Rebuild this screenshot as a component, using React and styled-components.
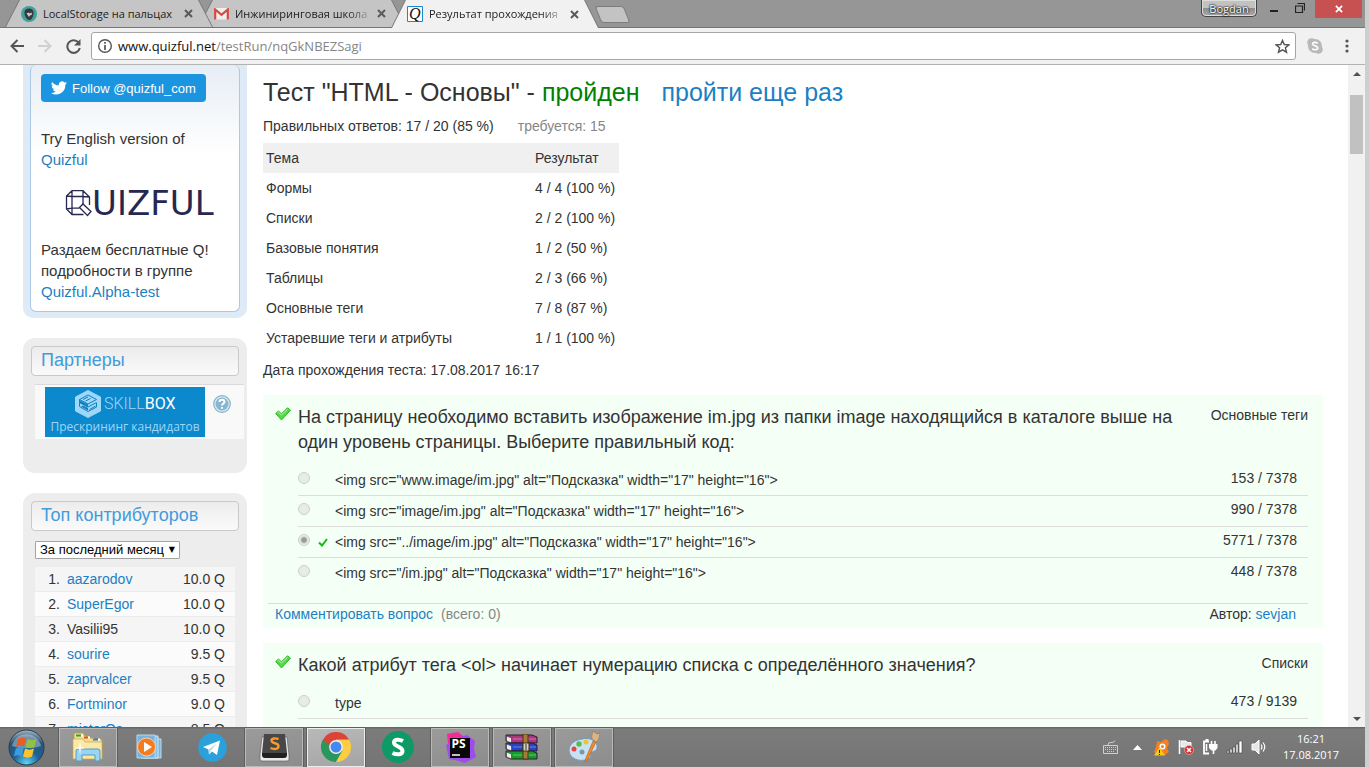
import React from "react";
import styled, { createGlobalStyle, css } from "styled-components";

const sans = '"Liberation Sans", Arial, sans-serif';
const ui = '"Open Sans", "Noto Sans", sans-serif';

const GlobalStyle = createGlobalStyle`
  * { box-sizing: border-box; }
  body { margin: 0; font: 14px/20px ${sans}; color: #333; background: #d2d2d2; }
  button, select, input { font: inherit; margin: 0; }
  button { padding: 0; border: 0; background: none; color: inherit; }
  a { color: #1c7fc4; text-decoration: none; }
  svg { display: block; flex: none; }
`;

const Desktop = styled.div`
  display: flex;
  flex-direction: column;
  height: 100vh;
  overflow: hidden;
  border-right: 4px solid #cecece;
  background: #fff;
`;

/* Browser window */
const TitleBar = styled.header`
  display: flex;
  align-items: flex-start;
  flex: none;
  height: 28px;
  padding-left: 5px;
  background: linear-gradient(#969696 27px, #757575 27px);
`;
const TabStrip = styled.nav`
  display: flex;
  flex: 1;
`;
const tabShape = css`
  clip-path: polygon(14px 0, calc(100% - 14px) 0, 100% 100%, 0 100%);
`;
const Tab = styled.div`
  position: relative;
  z-index: ${(p) => (p.$active ? 3 : p.$order)};
  display: flex;
  align-items: center;
  width: 208px;
  height: ${(p) => (p.$active ? 28 : 27)}px;
  margin-right: -15px;
  padding: 0 20px 0 16px;
  background: #797979;
  ${tabShape}
  &::before {
    content: "";
    position: absolute;
    z-index: -1;
    inset: 0 1px;
    background: ${(p) => (p.$active ? "#f1f1f1" : "#c5c5c5")};
    ${tabShape}
  }
`;
const TabTitle = styled.a`
  flex: 1;
  margin: 0 4px 0 6px;
  overflow: hidden;
  white-space: nowrap;
  font: 11px/16px ${ui};
  color: #222;
  ${(p) => p.$fade && css`mask-image: linear-gradient(90deg, #000 82%, transparent);`}
`;
const IconButton = styled.button`
  display: flex;
  align-items: center;
  justify-content: center;
`;
const NewTab = styled.button`
  width: 29px;
  height: 17px;
  margin: 6px 0 0 14px;
  background: #c3c3c3;
  border: 1px solid #7c7c7c;
  border-radius: 3px;
  transform: skewX(22deg);
`;
const Profile = styled.button`
  width: 56px;
  height: 17px;
  margin-right: 4px;
  font: 11px/15px ${ui};
  color: #fff;
  text-shadow: 0 0 2px #222, 0 0 2px #222, 0 0 1px #222;
  background: linear-gradient(#c2c2c2 50%, #8b8b8b 50%, #aaa);
  border: 1px solid #444;
  border-top: 0;
  border-radius: 0 0 5px 5px;
  box-shadow: inset 0 0 0 1px #ddd;
`;
const WindowButton = styled(IconButton)`
  width: ${(p) => (p.$close ? 47 : 26)}px;
  height: 18px;
  background: ${(p) => (p.$close ? "#c75050" : "transparent")};
  margin: ${(p) => (p.$close ? "0 3px 0 2px" : 0)};
`;
const WindowControls = styled.div`
  display: flex;
`;
const Toolbar = styled.div`
  display: flex;
  align-items: center;
  flex: none;
  height: 37px;
  padding: 0 4px 0 8px;
  background: #f1f1f1;
  border-bottom: 1px solid #b3b3b3;
`;
const ToolButton = styled(IconButton)`
  width: ${(p) => p.$width || 28}px;
  height: 28px;
`;
const AddressBar = styled.div`
  display: flex;
  align-items: center;
  flex: 1;
  height: 28px;
  margin-left: 9px;
  padding: 0 5px;
  background: #fff;
  border: 1px solid #a6a6a6;
  border-radius: 3px;
`;
const Address = styled.p`
  flex: 1;
  margin: 0 0 0 5px;
  font: 13px/20px ${ui};
  color: #858585;
  b { font-weight: 400; color: #111; }
`;

/* Page */
const Viewport = styled.div`
  display: flex;
  flex: 1;
  min-height: 0;
`;
const Page = styled.div`
  display: flex;
  flex: 1;
  gap: 16px;
  min-width: 0;
  padding: 0 25px 0 23px;
  overflow: hidden;
`;
const Scrollbar = styled.div`
  display: flex;
  flex-direction: column;
  align-items: center;
  width: 17px;
  padding: 7px 0 6px;
  background: #f1f1f1;
`;
const Thumb = styled.div`
  width: 13px;
  height: 59px;
  margin: 19px 0 auto;
  background: #c1c1c1;
`;
const Triangle = styled.i`
  border: 4px solid transparent;
  border-top: ${(p) => (p.$up ? 0 : "4px solid #505050")};
  border-bottom: ${(p) => (p.$up ? "4px solid #505050" : 0)};
`;

const Sidebar = styled.aside`
  display: flex;
  flex-direction: column;
  flex: none;
  gap: 20px;
  width: 224px;
`;
const Promo = styled.section`
  flex: none;
  padding: 0 7px 6px;
  background: #deebf7;
  border-radius: 0 0 10px 10px;
`;
const PromoBody = styled.div`
  padding: 9px 10px;
  font-size: 15px;
  line-height: 21px;
  background: linear-gradient(#e7edf5, #fff 90px);
  border: 1px solid #a9cae6;
  border-top: 0;
  border-radius: 6px;
  p { margin: 0; }
`;
const Follow = styled.a`
  display: flex;
  align-items: center;
  gap: 5px;
  width: 165px;
  height: 28px;
  margin-bottom: 26px;
  padding-left: 10px;
  font-size: 13px;
  white-space: nowrap;
  color: #fff;
  background: #1b95e0;
  border-radius: 4px;
`;
const Logo = styled.div`
  display: flex;
  align-items: center;
  height: 28px;
  margin: 19px 0 22px 24px;
  font: 34px/28px "DejaVu Sans", sans-serif;
  color: #272851;
`;
const Card = styled.section`
  display: flex;
  flex-direction: column;
  flex: ${(p) => (p.$grow ? "1 0 auto" : "none")};
  padding: 8px 8px ${(p) => (p.$grow ? 0 : 34)}px;
  background: #ededed;
  border-radius: 12px;
`;
const CardTitle = styled.h2`
  margin: 0 0 8px;
  padding: 0 9px;
  font-size: 18px;
  font-weight: 400;
  line-height: 26px;
  height: 30px;
  color: #429bdc;
  background: linear-gradient(#ececec, #fafafa);
  border: 1px solid #c9c9c9;
  border-radius: 4px;
`;
const Partner = styled.div`
  display: flex;
  gap: 8px;
  margin: 0 -5px 0 4px;
  padding: 2px 0 2px 10px;
  background: #f9f9f9;
  border-top: 1px solid #dadada;
`;
const Banner = styled.a`
  display: block;
  width: 160px;
  height: 50px;
  padding-top: 3px;
  text-align: center;
  white-space: nowrap;
  background: #0c88cd;
  font: 12px/18px "Open Sans", sans-serif;
  color: #9dd7fa;
`;
const BannerBrand = styled.span`
  display: flex;
  align-items: center;
  gap: 3px;
  height: 28px;
  padding-left: 30px;
  font: 300 16px/28px Roboto, sans-serif;
  b { font-weight: 400; color: #fff; }
`;
const Help = styled(IconButton)`
  height: 18px;
  margin-top: 8px;
`;
const SelectBox = styled.div`
  position: relative;
  width: 145px;
  margin: 2px 0 8px 4px;
  &::after {
    content: "▼";
    position: absolute;
    right: 5px;
    top: 0;
    font: 8px/18px "DejaVu Sans", sans-serif;
    color: #000;
    pointer-events: none;
  }
`;
const Select = styled.select`
  display: block;
  width: 100%;
  height: 18px;
  padding: 0 4px;
  appearance: none;
  font-size: 13px;
  line-height: 16px;
  color: #000;
  background: #fff;
  border: 1px solid #a3a3a3;
  border-radius: 1px;
`;
const Ranking = styled.table`
  width: 200px;
  margin-left: 4px;
  border-spacing: 0;
  td { height: 25px; padding: 0; border-bottom: 1px solid #ececec; line-height: 20px; }
  td:first-child { width: 25px; text-align: right; }
  td:nth-child(2) { padding-left: 7px; }
  td:last-child { padding-right: 10px; text-align: right; }
  tr:nth-child(odd) { background: #f5f5f5; }
  tr:nth-child(even) { background: #fbfbfb; }
`;

const Main = styled.main`
  display: flex;
  flex-direction: column;
  flex: 1;
  min-width: 0;
  padding-top: 12px;
`;
const Title = styled.h1`
  margin: 0 0 9px;
  font-size: 25px;
  font-weight: 400;
  line-height: 30px;
  a { margin-left: 15px; }
`;
const Passed = styled.span`
  color: #008000;
`;
const Line = styled.p`
  margin: ${(p) => p.$top || 0}px 0 ${(p) => p.$bottom || 0}px;
`;
const Muted = styled.span`
  margin-left: ${(p) => p.$gap}px;
  color: #868686;
`;
const Results = styled.table`
  width: 356px;
  border-collapse: collapse;
  th, td { height: 30px; padding: 0 3px; text-align: left; font-weight: 400; }
  th { background: #f0f0f0; }
  th:first-child { width: 269px; }
`;
const Question = styled.section`
  flex: ${(p) => (p.$grow ? "1 0 auto" : "none")};
  margin-bottom: ${(p) => (p.$grow ? 0 : 15)}px;
  padding: 10px 15px 4px 5px;
  background: #f4fff6;
`;
const QuestionHead = styled.div`
  display: flex;
  align-items: flex-start;
  margin: 0 0 10px 7px;
  svg { margin-top: 2px; }
`;
const QuestionText = styled.h3`
  flex: 1;
  margin: 0 20px 0 7px;
  font-size: 18px;
  font-weight: 400;
  line-height: 25px;
`;
const Answers = styled.ul`
  list-style: none;
  margin: 0 0 0 30px;
  padding: 0;
`;
const Answer = styled.li`
  display: grid;
  grid-template-columns: 20px 17px 1fr auto;
  height: 31px;
  padding: 3px 11px 0 0;
  border-bottom: 1px solid ${(p) => (p.$last ? "transparent" : "#dcdedc")};
  label { padding-top: 2px; }
`;
const Radio = styled.input`
  appearance: none;
  width: 12px;
  height: 12px;
  margin-top: 4px;
  border: 1px solid #cbd0cb;
  border-radius: 50%;
  background: #e7ece7;
  &:checked { background: radial-gradient(circle, #989c98 2px, #e7ece7 4px); }
`;
const Mark = styled.span`
  padding-top: 8px;
`;
const QuestionFoot = styled.footer`
  display: flex;
  justify-content: space-between;
  margin-top: 14px;
  padding: 0 12px 0 7px;
  border-top: 1px solid #dcdedc;
`;

/* Taskbar */
const Taskbar = styled.footer`
  display: flex;
  align-items: center;
  flex: none;
  height: 40px;
  padding: 0 25px 0 8px;
  background: linear-gradient(#686868 1px, #7c7c7c 2px, #747474);
`;
const Apps = styled.div`
  display: flex;
  flex: 1;
  gap: 4px;
  margin-left: 14px;
`;
const AppButton = styled(IconButton)`
  width: 58px;
  height: 39px;
  ${(p) => p.$open && css`
    background: linear-gradient(160deg, #9b9b9b, #8c8c8c);
    border: 1px solid #b9b9b9;
    outline: 1px solid #5f5f5f;
  `}
  ${(p) => p.$active && css`
    background: linear-gradient(170deg, #b9b9b9, #a4a4a4);
    border-color: #eee;
  `}
`;
const Tray = styled.div`
  display: flex;
  align-items: center;
  gap: 8px;
  color: #fff;
`;
const Clock = styled.time`
  width: 58px;
  margin-left: 7px;
  font: 11px/16px ${ui};
  text-align: center;
  white-space: nowrap;
  color: #fff;
`;

const CloseIcon = ({ size = 9, color = "#5a5a5a", width = 2 }) => (
  <svg width={size} height={size} viewBox="0 0 9 9" stroke={color} strokeWidth={width}><path d="M1 1l7 7M8 1L1 8" /></svg>
);

const BigCheck = () => (
  <svg width="16" height="14" viewBox="0 0 16 14">
    <path d="M.7 6.500L3.500 4l3 2.800L12.500.8l3 2.400L6.500 13z" fill="#4fdb42" stroke="#35b52e" strokeWidth="1" strokeLinejoin="round" />
    <path d="M2.500 6l1-.8 3 2.800 6-5.700" stroke="#b8f8ae" fill="none" />
  </svg>
);
const SmallCheck = () => (
  <svg width="10" height="9" viewBox="0 0 10 9"><path d="M1 4.500l3 3L9 1" fill="none" stroke="#10bd10" strokeWidth="2" /></svg>
);

const Hipster = () => (
  <svg width="16" height="16" viewBox="0 0 16 16">
    <circle cx="8" cy="8" r="8" fill="#3fa29d" />
    <path d="M3.500 6.500c0-3 2-4 4.500-4s4.500 1 4.500 4c0 4-1.500 7-4 7.500-3-.5-5-3.500-5-7.500z" fill="#39393d" />
    <path d="M5.500 7.500l2-1 1 1 2-1 .5 2-2 1-1 1.500-1-1.500z" fill="#c9cfd0" />
  </svg>
);
const Gmail = () => (
  <svg width="15" height="12" viewBox="0 0 15 12">
    <path d="M1 0h13v11.500H1z" fill="#eee" />
    <path d="M1.200 11.500V1.500l6.300 5.300 6.300-5.300v10" fill="none" stroke="#d54b3d" strokeWidth="2.200" />
  </svg>
);
const QIcon = () => (
  <svg width="16" height="16" viewBox="0 0 16 16">
    <path d="M.5.500h15v15H.5z" fill="#fff" stroke="#1c87cf" />
    <text x="2" y="12.500" fontFamily="Liberation Serif" fontStyle="italic" fontSize="16" fill="#111">Q</text>
  </svg>
);
const Twitter = () => (
  <svg width="16" height="14" viewBox="0 0 24 20" fill="#fff">
    <path d="M24 2.400a10 10 0 0 1-2.800.8A5 5 0 0 0 23.300.5a10 10 0 0 1-3.100 1.200A4.900 4.900 0 0 0 11.800 6.200 14 14 0 0 1 1.700 1a4.900 4.900 0 0 0 1.500 6.600A5 5 0 0 1 1 7v.1a4.900 4.900 0 0 0 3.900 4.800 5 5 0 0 1-2.200.1 4.900 4.900 0 0 0 4.600 3.400A9.900 9.900 0 0 1 0 17.500 14 14 0 0 0 21.500 5z" />
  </svg>
);
const QuizfulMark = () => (
  <svg width="27" height="28" viewBox="0 0 27 28" fill="none" stroke="#272851" strokeWidth="1.300">
    <path d="M18 15V1.700H7L1.500 7v13L7 25.500h11.500M18 1.700L24.500 8v8M7 1.700V7M1.500 7l5.500 .5h11l6.500 .5M7 7.500v12M1.500 20l5.500-.8h7.500M7 19.500v6" />
    <path d="M14.500 18.500l3.500-3.500 8 7.500-3.500 4z" />
  </svg>
);
const Skillbox = () => (
  <svg width="26" height="28" viewBox="0 0 26 28">
    <path d="M13 .5L25.500 7v14L13 27.500.5 21V7z" fill="#9dd7fa" stroke="#9dd7fa" strokeLinejoin="round" />
    <path d="M4.500 9.500L13 5l8.500 4.500L13 14zM4.500 9.500v3l8.500 4.500 8.500-4.500M4.500 12.500v4l8.500 5 8.500-4.500v-4" fill="none" stroke="#1180bd" />
    <path d="M5 10.500l8 4v2.500l-8-4zM8 15.500l5 2.500v2.500l-7-4z" fill="#1180bd" />
    <path d="M8 9.500l5-2.500M10.500 11l5-2.500M14.500 19.500l6-3.500" stroke="#1180bd" />
  </svg>
);

const HelpIcon = () => (
  <svg width="18" height="18" viewBox="0 0 18 18" fill="none">
    <circle cx="9" cy="9" r="8.300" fill="#dceaf2" stroke="#86b3cb" strokeWidth="1.200" />
    <circle cx="9" cy="9" r="6.500" fill="#86b6d0" />
    <path d="M6.500 7c0-3 5-3 5 0 0 1.500-2.500 1.700-2.500 3.500M9 12v1.800" stroke="#fff" strokeWidth="1.900" />
  </svg>
);

const StartOrb = () => (
  <svg width="37" height="37" viewBox="0 0 37 37">
    <defs>
      <radialGradient id="orb" cx=".5" cy=".95" r=".95"><stop offset="0" stopColor="#5ed3f7" /><stop offset=".4" stopColor="#1d6294" /><stop offset=".75" stopColor="#2b5375" /><stop offset="1" stopColor="#a8bcc9" /></radialGradient>
    </defs>
    <circle cx="18.500" cy="18.500" r="17.500" fill="url(#orb)" stroke="#263c4c" />
    <path d="M4 17A14.800 14.800 0 0 1 33 17c-10 3-20 3-29 0z" fill="#dfeaf0" opacity=".4" />
    <path d="M10 10c3-2 5-2 8-.5l-2 8c-3-1.500-5-1.500-8 .2z" fill="#e85d28" />
    <path d="M19.500 10c3 1.500 6 1.500 9 0l-2 8c-3 1.500-6 1.500-9 0z" fill="#92c144" />
    <path d="M7.800 19.500c3-1.700 5-1.700 8-.2l-2 8c-3-1.500-5-1.500-8 .2z" fill="#3e9bdd" />
    <path d="M17 19.600c3 1.500 6 1.500 9 0l-2 8c-3 1.500-6 1.500-9 0z" fill="#fbc32c" />
  </svg>
);
const Explorer = () => (
  <svg width="34" height="30" viewBox="0 0 34 30">
    <path d="M3 27V2q0-1 1-1h8l2 3h4l1 2h4l1 1h6l1 2v18z" fill="#f4dc8a" stroke="#b99a45" strokeWidth=".8" />
    <path d="M5 2.500h5v2H5z" fill="#29a63c" /><path d="M13 4.500h4v2h-4z" fill="#d9532b" /><path d="M22 6.500h5v2h-5z" fill="#2d87ca" />
    <path d="M10 3.500h2M17 5.500h2M27 7.500h2" stroke="#fff" strokeWidth="2" />
    <path d="M2 7h10l2 3h17v17H2z" fill="#f9e8a6" stroke="#c7a850" strokeWidth=".7" />
    <path d="M5 29V19q0-2 2-2h20q2 0 2 2v10h-5v-6H11v6z" fill="#9bd4f1" stroke="#4e9cc9" />
    <path d="M9 9l1 6 5 1-5 1-1 6-1-6-5-1 5-1z" fill="#fff" opacity=".8" />
  </svg>
);
const Player = () => (
  <svg width="28" height="26" viewBox="0 0 28 26">
    <path d="M8 4l17 1v19H8z" fill="#7fb4d6" stroke="#bcdcf0" /><path d="M5 2h17v22H5z" fill="#8cc2e4" stroke="#cce7f7" /><path d="M1 1h18v23H1z" fill="#75b4df" stroke="#b6dbf2" />
    <circle cx="10.500" cy="13" r="9" fill="#f27c22" stroke="#ffd0a1" /><path d="M8 8l8 5-8 5z" fill="#fff" />
  </svg>
);
const Telegram = () => (
  <svg width="29" height="29" viewBox="0 0 29 29">
    <circle cx="14.500" cy="14.500" r="14.300" fill="#2ba1dc" />
    <path d="M5 14l17-6.500-3 14.500-5-3.500-3 3-.5-5z" fill="#fff" /><path d="M10.500 16.500L19 10.500l-6 7-2 4z" fill="#b9d8ea" />
  </svg>
);
const Sublime = () => (
  <svg width="31" height="29" viewBox="0 0 31 29">
    <path d="M3 4L1 22v4q0 2 2 2h25q2 0 2-2v-4L28 4z" fill="#e9e9e9" stroke="#555" strokeWidth=".6" />
    <path d="M5 1h21l2 19q0 3-2 3H5q-2 0-2-3z" fill="#474747" /><path d="M3 20h25v2q0 3-3 3H6q-3 0-3-3z" fill="#202020" />
    <path d="M19.500 6c-3-1-7-1-7 1.500 0 3.500 7 2 7 5.500 0 3.500-4.500 3.500-8 2" fill="none" stroke="#f79b2d" strokeWidth="2.400" />
  </svg>
);
const Chrome = () => (
  <svg width="30" height="30" viewBox="0 0 30 30">
    <path d="M2 7.500a15 15 0 0 0 13 22.500l6.500-11.300L15 15z" fill="#28985d" />
    <path d="M28 7.500a15 15 0 0 1-13 22.500l6.500-11.300L15 7.500z" fill="#fccd42" /><path d="M2 7.500l6.500 11.300L15 15V7.500h13a15 15 0 0 0-26 0z" fill="#db4437" />
    <path d="M2 7.500l6.500 11.300 3 3.200-1-7z" fill="#28985d" /><circle cx="15" cy="15" r="6.900" fill="#f1f1f1" /><circle cx="15" cy="15" r="5.500" fill="#4688f1" />
  </svg>
);
const Skrinshoter = () => (
  <svg width="32" height="32" viewBox="0 0 32 32">
    <circle cx="16" cy="16" r="16" fill="#0d9a67" /><path d="M21 10c-4-2-9-2-9 1.500 0 4.500 8.500 3.500 8.500 8.500 0 4-6 4-10 2" fill="none" stroke="#fff" strokeWidth="4" />
  </svg>
);
const PhpStorm = () => (
  <svg width="33" height="33" viewBox="0 0 33 33">
    <path d="M3 3l11-2 6 5-6 16H5z" fill="#f42b98" /><path d="M16 6l7-2 8 6-1 8 2 8-11 6-10-3-6-1-3-14z" fill="#a04bee" />
    <path d="M6 7h20v20H6z" fill="#080808" /><path d="M8 24h8" stroke="#fff" strokeWidth="1.500" />
    <text x="7.500" y="17" fill="#fff" fontFamily="Open Sans" fontWeight="700" fontSize="12">PS</text>
  </svg>
);
const WinRar = () => (
  <svg width="34" height="26" viewBox="0 0 34 26">
    {[["#a9367e", 1], ["#2444c4", 9], ["#149d28", 17]].map(([c, y]) => (
      <g key={y}><path d={`M1 ${y}h26l5 2v6H6l-5-2z`} fill={c} stroke="#301c2c" /><path d={`M1.500 ${y + 1}l5 2v5l-5-2z`} fill="#eee" stroke="#444" strokeWidth=".7" /><path d={`M8 ${y + 4}h23`} stroke="#fff" opacity=".35" /></g>
    ))}
    <path d="M18 0h5v25h-5z" fill="#a87a38" stroke="#4e3511" /><path d="M18 9h6v8h-6z" fill="#d9d2bd" stroke="#3a2c10" /><path d="M21 10v6" stroke="#333" />
  </svg>
);
const Paint = () => (
  <svg width="33" height="33" viewBox="0 0 33 33">
    <path d="M14 8c8-2 16 2 15 9-1 4-5 3-6 5s1 4-3 6C11 32 1 27 1 19 1 13 7 9 14 8z" fill="#c9e2f3" stroke="#6f9dbd" />
    <circle cx="6" cy="18" r="2.500" fill="#e3473d" /><circle cx="11" cy="13" r="2.700" fill="#5bb94b" /><circle cx="18" cy="11" r="2.500" fill="#f3c42a" /><circle cx="14" cy="21" r="2.500" fill="#7d98aa" />
    <path d="M25 10l3 1-9 19-2 1 .5-3z" fill="#ec8a32" stroke="#b55d17" strokeWidth=".6" /><path d="M24 8c-1-4 1-6 1-8l4 3 3-1c-1 3 0 6-4 9z" fill="#d9b48a" stroke="#9a7447" strokeWidth=".6" />
  </svg>
);

const apps = [
  ["Проводник", Explorer, 1], ["Проигрыватель", Player, 0], ["Telegram", Telegram, 0], ["Sublime Text", Sublime, 1], ["Google Chrome", Chrome, 2],
  ["Скриншотер", Skrinshoter, 0], ["PhpStorm", PhpStorm, 1], ["WinRAR", WinRar, 1], ["Paint", Paint, 1],
];

const topics = [
  ["Формы", "4 / 4 (100 %)"], ["Списки", "2 / 2 (100 %)"], ["Базовые понятия", "1 / 2 (50 %)"], ["Таблицы", "2 / 3 (66 %)"],
  ["Основные теги", "7 / 8 (87 %)"], ["Устаревшие теги и атрибуты", "1 / 1 (100 %)"],
];
const contributors = [
  ["aazarodov", "10.0 Q"], ["SuperEgor", "10.0 Q"], ["Vasilii95", "10.0 Q", true], ["sourire", "9.5 Q"], ["zaprvalcer", "9.5 Q"], ["Fortminor", "9.0 Q"], ["misterOs", "8.5 Q"],
];
const questions = [
  {
    text: "На страницу необходимо вставить изображение im.jpg из папки image находящийся в каталоге выше на один уровень страницы. Выберите правильный код:",
    topic: "Основные теги",
    comments: 0,
    author: "sevjan",
    answers: [
      ['<img src="www.image/im.jpg" alt="Подсказка" width="17" height="16">', "153 / 7378"],
      ['<img src="image/im.jpg" alt="Подсказка" width="17" height="16">', "990 / 7378"],
      ['<img src="../image/im.jpg" alt="Подсказка" width="17" height="16">', "5771 / 7378", true],
      ['<img src="/im.jpg" alt="Подсказка" width="17" height="16">', "448 / 7378"],
    ],
  },
  { text: "Какой атрибут тега <ol> начинает нумерацию списка с определённого значения?", topic: "Списки", answers: [["type", "473 / 9139"]] },
];

function BrowserTab({ icon, title, order, active, fade }) {
  return (
    <Tab $order={order} $active={active}>
      {icon}
      <TabTitle href="#" $fade={fade}>{title}</TabTitle>
      <IconButton aria-label="Закрыть вкладку"><CloseIcon /></IconButton>
    </Tab>
  );
}

function QuestionBlock({ question, index }) {
  const { text, topic, answers, author, comments } = question;
  return (
    <Question $grow={!author}>
      <QuestionHead>
        <BigCheck />
        <QuestionText>{text}</QuestionText>
        <span>{topic}</span>
      </QuestionHead>
      <Answers>
        {answers.map(([label, count, chosen], i) => (
          <Answer key={label} $last={author && i === answers.length - 1}>
            <Radio type="radio" id={`q${index}-${i}`} name={`q${index}`} defaultChecked={chosen} disabled />
            <Mark>{chosen && <SmallCheck />}</Mark>
            <label htmlFor={`q${index}-${i}`}>{label}</label>
            <span>{count}</span>
          </Answer>
        ))}
      </Answers>
      {author && (
        <QuestionFoot>
          <span><a href="#">Комментировать вопрос</a><Muted $gap={8}>(всего: {comments})</Muted></span>
          <span>Автор: <a href="#">{author}</a></span>
        </QuestionFoot>
      )}
    </Question>
  );
}

export default function App() {
  return (
    <Desktop>
      <GlobalStyle />
      <TitleBar>
        <TabStrip>
          <BrowserTab order={2} icon={<Hipster />} title="LocalStorage на пальцах" />
          <BrowserTab order={1} icon={<Gmail />} title="Инжиниринговая школа" fade />
          <BrowserTab order={3} icon={<QIcon />} title="Результат прохождения" active fade />
          <NewTab aria-label="Новая вкладка" />
        </TabStrip>
        <Profile>Bogdan</Profile>
        <WindowControls>
          <WindowButton aria-label="Свернуть"><svg width="8" height="14" viewBox="0 0 8 14"><path d="M0 9h8" stroke="#222" strokeWidth="2" /></svg></WindowButton>
          <WindowButton aria-label="Развернуть"><svg width="10" height="12" viewBox="0 0 10 12" fill="none" stroke="#222"><path d="M.5 3h7v6.500h-7zM0 3h8M2.500.5h7v7" strokeWidth="1.200" /></svg></WindowButton>
          <WindowButton aria-label="Закрыть" $close><CloseIcon color="#fff" size={8} /></WindowButton>
        </WindowControls>
      </TitleBar>
      <Toolbar>
        <ToolButton $width={18} aria-label="Назад"><svg width="14" height="14" viewBox="0 0 14 14" fill="none" stroke="#555" strokeWidth="2"><path d="M14 7H1.500M7.500 1L1.500 7l6 6" /></svg></ToolButton>
        <ToolButton $width={38} aria-label="Вперёд"><svg width="14" height="14" viewBox="0 0 14 14" fill="none" stroke="#d0d0d0" strokeWidth="2"><path d="M0 7h12.500M6.500 1l6 6-6 6" /></svg></ToolButton>
        <ToolButton $width={18} aria-label="Обновить"><svg width="15" height="15" viewBox="0 0 15 15"><path d="M12.500 3.500A6.300 6.300 0 1 0 13.800 9" fill="none" stroke="#555" strokeWidth="2" /><path d="M14.500 0v6.500H8z" fill="#555" /></svg></ToolButton>
        <AddressBar>
          <IconButton aria-label="Сведения о сайте"><svg width="16" height="16" viewBox="0 0 16 16" fill="none" stroke="#555"><circle cx="8" cy="8" r="6.300" strokeWidth="1.400" /><path d="M8 7v5M8 4v1.700" strokeWidth="1.700" /></svg></IconButton>
          <Address><b>www.quizful.net</b>/testRun/nqGkNBEZSagi</Address>
          <IconButton aria-label="В закладки"><svg width="15" height="15" viewBox="0 0 16 16" fill="none" stroke="#555" strokeWidth="1.500"><path d="M8 1.500l1.900 4.400 4.900.4-3.700 3.100 1.200 4.700L8 11.600l-4.300 2.500 1.200-4.700L1.200 6.300l4.900-.4z" /></svg></IconButton>
        </AddressBar>
        <ToolButton $width={37} aria-label="Skype"><svg width="16" height="16" viewBox="0 0 16 16"><circle cx="4.500" cy="4.500" r="4.300" fill="#b9b9b9" /><circle cx="11.500" cy="11.500" r="4.300" fill="#b9b9b9" /><circle cx="8" cy="8" r="7" fill="#b9b9b9" /><path d="M10.700 5.300C9 4 5.500 4 5.500 6c0 2.200 5.200 1.300 5.200 4 0 2.200-3.700 2.200-5.500.7" fill="none" stroke="#fff" strokeWidth="1.600" /></svg></ToolButton>
        <ToolButton aria-label="Меню"><svg width="4" height="14" viewBox="0 0 4 14" fill="#555"><circle cx="2" cy="2" r="1.600" /><circle cx="2" cy="7" r="1.600" /><circle cx="2" cy="12" r="1.600" /></svg></ToolButton>
      </Toolbar>

      <Viewport>
        <Page>
          <Sidebar>
            <Promo>
              <PromoBody>
                <Follow href="#"><Twitter />Follow @quizful_com</Follow>
                <p>Try English version of <a href="#">Quizful</a></p>
                <Logo><QuizfulMark />UIZFUL</Logo>
                <p>Раздаем бесплатные Q! подробности в группе <a href="#">Quizful.Alpha-test</a></p>
              </PromoBody>
            </Promo>
            <Card>
              <CardTitle>Партнеры</CardTitle>
              <Partner>
                <Banner href="#">
                  <BannerBrand><Skillbox /><span>SKILL<b>BOX</b></span></BannerBrand>
                  Прескрининг кандидатов
                </Banner>
                <Help aria-label="Справка"><HelpIcon /></Help>
              </Partner>
            </Card>
            <Card $grow>
              <CardTitle>Топ контрибуторов</CardTitle>
              <SelectBox>
                <Select aria-label="Период"><option>За последний месяц</option></Select>
              </SelectBox>
              <Ranking>
                <tbody>
                  {contributors.map(([name, score, plain], i) => (
                    <tr key={name}><td>{i + 1}.</td><td>{plain ? name : <a href="#">{name}</a>}</td><td>{score}</td></tr>
                  ))}
                </tbody>
              </Ranking>
            </Card>
          </Sidebar>
          <Main>
            <Title>Тест "HTML - Основы" - <Passed>пройден</Passed> <a href="#">пройти еще раз</a></Title>
            <Line $bottom={7}>Правильных ответов: 17 / 20 (85 %)<Muted $gap={24}>требуется: 15</Muted></Line>
            <Results>
              <thead><tr><th>Тема</th><th>Результат</th></tr></thead>
              <tbody>{topics.map(([name, score]) => <tr key={name}><td>{name}</td><td>{score}</td></tr>)}</tbody>
            </Results>
            <Line $top={7} $bottom={15}>Дата прохождения теста: 17.08.2017 16:17</Line>
            {questions.map((q, i) => <QuestionBlock key={q.text} question={q} index={i} />)}
          </Main>
        </Page>
        <Scrollbar><Triangle $up /><Thumb /><Triangle /></Scrollbar>
      </Viewport>

      <Taskbar>
        <IconButton aria-label="Пуск"><StartOrb /></IconButton>
        <Apps>
          {apps.map(([name, Icon, state]) => <AppButton key={name} aria-label={name} $open={state > 0} $active={state === 2}><Icon /></AppButton>)}
        </Apps>
        <Tray>
          <svg width="22" height="15" viewBox="0 0 22 15" fill="none" stroke="#d0d0d0"><path d="M.5 5.500h14v8H.5z" /><path d="M2 7.500h11M2 9.500h11M4 11.500h7" strokeDasharray="1 1" /><path d="M5 5q0-3 3-2.500t4-2" /></svg>
          <svg width="13" height="5" viewBox="0 0 13 5"><path d="M0 5L4.500 0 9 5z" fill="#fff" /></svg>
          <svg width="16" height="17" viewBox="0 0 16 17"><path d="M3 2l4 1 4-3 3 1 1 4-2 4 2 4-4 3H4l-4-3 2-5z" fill="#f77f1d" /><circle cx="8.500" cy="7.500" r="2.300" fill="none" stroke="#fff" strokeWidth="1.500" /><path d="M5.500 8l5.500 8.500H0z" fill="#f8c81c" /><path d="M5.500 11v3M5.500 15v1" stroke="#222" /></svg>
          <svg width="16" height="16" viewBox="0 0 16 16"><path d="M1.500 1v14" stroke="#fff" strokeWidth="1.500" /><path d="M3 2h5l1 1.500h4V9H8L7 8H3z" fill="#e8e8e8" stroke="#fff" /><circle cx="11" cy="11" r="4.500" fill="#d92c2c" stroke="#f3a6a6" strokeWidth=".7" /><path d="M9 9l4 4M13 9l-4 4" stroke="#fff" strokeWidth="1.500" /></svg>
          <svg width="16" height="16" viewBox="0 0 16 16" fill="none" stroke="#fff"><path d="M7 14.500H2V2.500h5M3.500 1h3" strokeWidth="1.800" /><path d="M4.500 5v7" strokeWidth="1.500" /><path d="M7 5h8.500v4l-2 2.500h-4L7 9z" fill="#fff" stroke="none" /><path d="M9.500 2v3M13 2v3M11.500 11v4" strokeWidth="1.600" /></svg>
          <svg width="17" height="14" viewBox="0 0 17 14" fill="#fff" stroke="#444" strokeWidth=".6"><path d="M1 11h2v2H1zM4 9h2v4H4zM7 7h2v6H7zM10 4h2v9h-2zM13 1h3v12h-3z" /></svg>
          <svg width="16" height="16" viewBox="0 0 16 16" fill="none" stroke="#fff"><path d="M1 5h3l4-4v14l-4-4H1z" fill="#e6e6e6" /><path d="M10 5.500q2 2.500 0 5M12 3.500q3.500 4.500 0 9" strokeWidth="1.200" /></svg>
          <Clock>16:21<br />17.08.2017</Clock>
        </Tray>
      </Taskbar>
    </Desktop>
  );
}
